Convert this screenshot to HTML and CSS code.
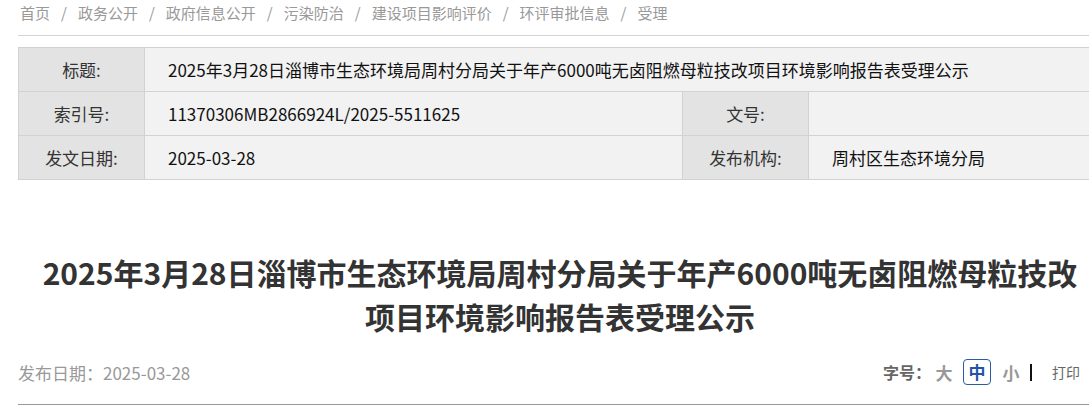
FILE: index.html
```html
<!DOCTYPE html>
<html lang="zh-CN">
<head>
<meta charset="utf-8">
<title>受理公示</title>
<link rel="stylesheet" href="styles.css">
</head>
<body>
<div class="page">
  <div class="crumbs">
    <a>首页</a><span class="sep">/</span><a>政务公开</a><span class="sep">/</span><a>政府信息公开</a><span class="sep">/</span><a>污染防治</a><span class="sep">/</span><a>建设项目影响评价</a><span class="sep">/</span><a>环评审批信息</a><span class="sep">/</span><a>受理</a>
  </div>
  <div class="rule"></div>
  <div class="meta">
    <div class="lbl">标题:</div>
    <div class="val span3">2025年3月28日淄博市生态环境局周村分局关于年产6000吨无卤阻燃母粒技改项目环境影响报告表受理公示</div>
    <div class="lbl">索引号:</div>
    <div class="val">11370306MB2866924L/2025-5511625</div>
    <div class="lbl">文号:</div>
    <div class="val"></div>
    <div class="lbl">发文日期:</div>
    <div class="val">2025-03-28</div>
    <div class="lbl">发布机构:</div>
    <div class="val">周村区生态环境分局</div>
  </div>
  <h1 class="title">2025年3月28日淄博市生态环境局周村分局关于年产6000吨无卤阻燃母粒技改项目环境影响报告表受理公示</h1>
  <div class="info">
    <div class="date">发布日期：2025-03-28</div>
    <div class="tools">
      <span class="fs-label">字号：</span>
      <span class="fs">大</span>
      <span class="fs active">中</span>
      <span class="fs">小</span>
      <span class="bar"></span>
      <span class="print">打印</span>
    </div>
  </div>
</div>
</body>
</html>
```

FILE: styles.css
```css
html, body {
  margin: 0;
  padding: 0;
  background: #fff;
  overflow: hidden;
}
body {
  font-family: "Noto Sans CJK SC", "Noto Sans", sans-serif;
  color: #333;
}
.page {
  width: 1084px;
  margin-left: 18px;
}
.crumbs {
  height: 26px;
  display: flex;
  align-items: center;
  font-size: 15px;
  color: #999;
  padding-left: 2px;
  line-height: 26px;
}
.crumbs a {
  color: #999;
}
.crumbs .sep {
  margin: 0 11px;
}
.rule {
  margin-top: 9px;
  border-top: 1px solid #d4d4d4;
}
.meta {
  margin-top: 11px;
  display: grid;
  grid-template-columns: 126px 538px 126px 1fr;
  border-top: 1px solid #d2d2d2;
  border-left: 1px solid #d2d2d2;
  font-size: 17px;
}
.meta > div {
  height: 43px;
  display: flex;
  align-items: center;
  border-right: 1px solid #d2d2d2;
  border-bottom: 1px solid #d2d2d2;
}
.lbl {
  background: #e3e3e3;
  color: #333;
  justify-content: center;
}
.val {
  background: #f2f2f2;
  color: #111;
  padding-left: 23px;
}
.span3 {
  grid-column: span 3;
}
.title {
  margin: 70px 0 0;
  padding: 0 14px;
  font-size: 30px;
  line-height: 44px;
  font-weight: bold;
  color: #333;
  text-align: center;
}
.info {
  height: 64px;
  padding-top: 2px;
  display: flex;
  justify-content: space-between;
  align-items: center;
  border-bottom: 1px solid #999;
}
.date {
  font-size: 17px;
  color: #999;
}
.tools {
  display: flex;
  align-items: center;
  margin-right: 22px;
}
.fs-label {
  font-size: 16px;
  font-weight: bold;
  color: #666;
  margin-right: -6px;
}
.fs {
  font-size: 17px;
  font-weight: bold;
  color: #999;
  margin-left: 9px;
  width: 20px;
  text-align: center;
}
.fs.active {
  width: 26px;
  height: 24px;
  line-height: 24px;
  border: 1px solid #2b5ca8;
  border-radius: 4px;
  color: #1f56a5;
  margin-left: 9px;
  margin-right: 1px;
}
.bar {
  width: 2px;
  height: 17px;
  background: #111;
  margin-left: 9px;
}
.print {
  font-size: 14px;
  color: #666;
  margin-left: 20px;
}
```
